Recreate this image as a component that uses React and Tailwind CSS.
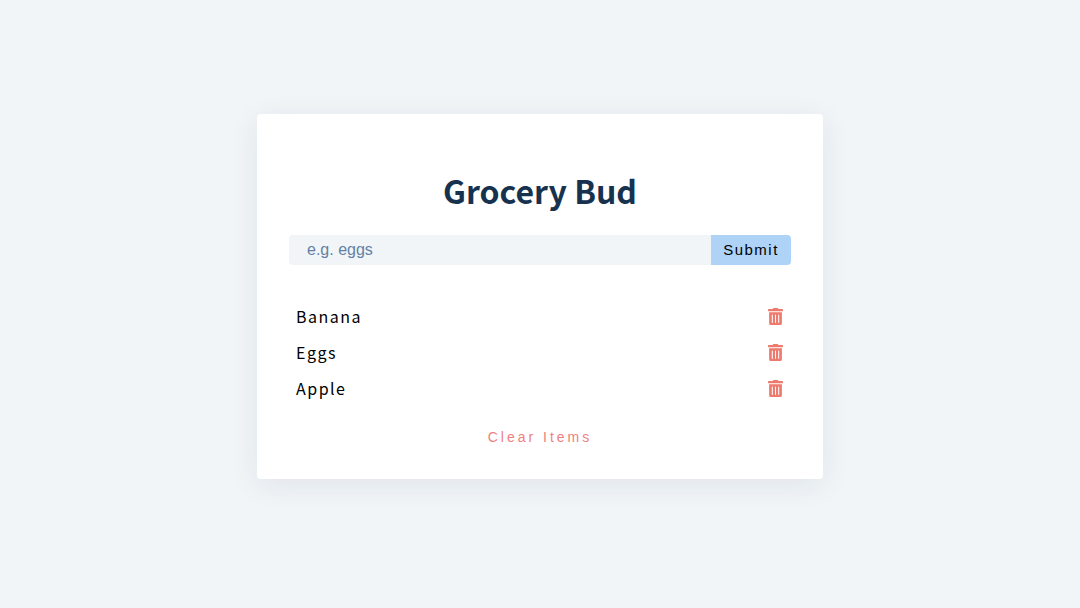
import { useState } from "react";
import { FaTrashAlt } from "react-icons/fa";

export default function App() {
  const [items, setItems] = useState(["Banana", "Eggs", "Apple"]);
  const [name, setName] = useState("");

  const addItem = (event) => {
    event.preventDefault();
    const value = name.trim();
    if (!value) return;
    setItems([...items, value]);
    setName("");
  };

  return (
    <main className="min-h-screen bg-[#f1f5f8] px-4 pt-[114px] pb-16 font-['Noto_Sans_CJK_JP',sans-serif] text-black">
      <section className="mx-auto max-w-[566px] rounded bg-white px-8 pt-[52px] pb-8 shadow-[0_6px_30px_rgba(30,40,70,0.08)]">
        <form onSubmit={addItem}>
          <h1 className="mb-[21px] text-center text-[32px] leading-[48px] font-bold text-[#16324f]">
            Grocery Bud
          </h1>
          <div className="flex h-[30px] font-['Liberation_Sans',sans-serif]">
            <input
              type="text"
              aria-label="Grocery item"
              placeholder="e.g. eggs"
              value={name}
              onChange={(event) => setName(event.target.value)}
              className="min-w-0 flex-1 rounded-l bg-[#f1f5f8] pl-[18px] text-base text-[#16324f] outline-none placeholder:text-[#6480a4]"
            />
            <button
              type="submit"
              className="w-20 cursor-pointer rounded-r bg-[#afd2f7] text-[15px] tracking-[1.5px]"
            >
              Submit
            </button>
          </div>
        </form>
        <div className="mt-[37px] flex flex-col">
          <ul className="flex flex-col gap-2">
            {items.map((item, index) => (
              <li
                key={index}
                className="flex h-7 items-center justify-between px-[7px]"
              >
                <p className="text-base leading-7 tracking-[1.5px]">{item}</p>
                <button
                  type="button"
                  aria-label={`Delete ${item}`}
                  onClick={() => setItems(items.filter((_, i) => i !== index))}
                  className="cursor-pointer text-[#ee7a6e]"
                >
                  <FaTrashAlt size={17} />
                </button>
              </li>
            ))}
          </ul>
          <button
            type="button"
            onClick={() => setItems([])}
            className="mt-[25px] cursor-pointer self-center font-['Liberation_Sans',sans-serif] text-sm tracking-[3px] text-[#f08080]"
          >
            Clear Items
          </button>
        </div>
      </section>
    </main>
  );
}
